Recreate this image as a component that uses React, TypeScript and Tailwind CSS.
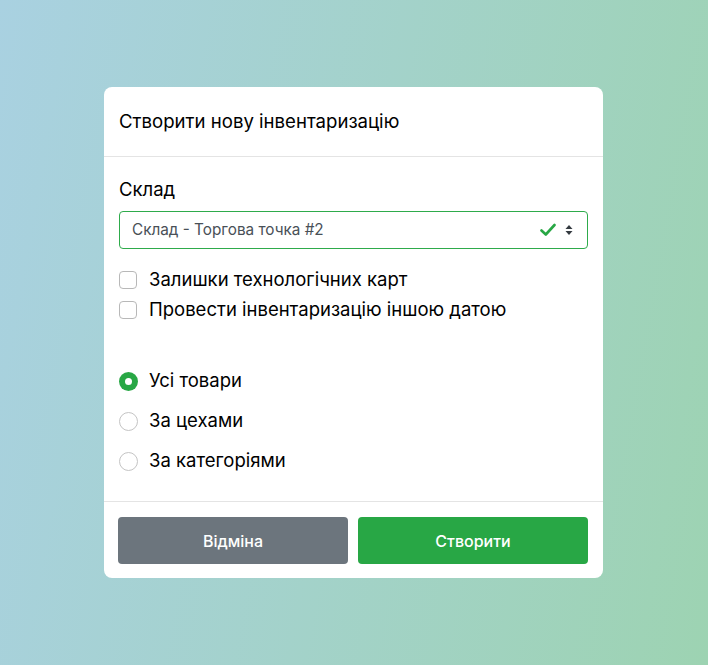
import React, { useState } from 'react';

const options = [
  { id: 'all', label: 'Усі товари' },
  { id: 'shops', label: 'За цехами' },
  { id: 'categories', label: 'За категоріями' },
];

const CheckRow: React.FC<{ label: string }> = ({ label }) => {
  const [on, setOn] = useState(false);
  return (
    <label className="flex items-center h-[30px] cursor-pointer" onClick={() => setOn(!on)}>
      <span
        className={`w-[18px] h-[18px] rounded-[4px] border ${on ? 'bg-[#28a745] border-[#28a745]' : 'bg-white border-[#b8b8b8]'}`}
      />
      <span className="ml-[12px] text-[18.5px] text-black">{label}</span>
    </label>
  );
};

export default function App() {
  const [mode, setMode] = useState('all');

  return (
    <div
      className="w-[708px] h-[665px] flex items-start justify-start pl-[104px] pt-[87px] bg-[linear-gradient(100deg,#a9d1e1,#9dd3b2)]"
      style={{ fontFamily: 'Inter, "Noto Sans", sans-serif' }}
    >
      <div className="w-[499px] bg-white rounded-[8px] flex flex-col">
        <div className="h-[70px] flex items-center px-[15px] border-b border-[#e4e4e4]">
          <h1 className="text-[18.6px] text-black">Створити нову інвентаризацію</h1>
        </div>

        <div className="px-[15px] pt-[20px] pb-[25px] flex flex-col">
          <div className="text-[18.5px] text-black leading-[24px]">Склад</div>
          <div className="mt-[10px] h-[38px] border border-[#2eab4b] rounded-[4px] flex items-center pl-[12px] pr-[14px]">
            <span className="flex-1 text-[15.3px] text-[#495057]">Склад - Торгова точка #2</span>
            <svg width="16" height="14" viewBox="0 0 16 14" className="mr-[9px]">
              <path d="M1.5 7.5 L5.8 11.5 L14.5 2" fill="none" stroke="#28a745" strokeWidth="2.6" strokeLinecap="round" strokeLinejoin="round" />
            </svg>
            <svg width="8" height="12" viewBox="0 0 8 12">
              <path d="M4 1 L7.5 5 H0.5 Z M4 11 L7.5 7 H0.5 Z" fill="#343a40" />
            </svg>
          </div>

          <div className="mt-[16px] flex flex-col">
            <CheckRow label="Залишки технологічних карт" />
            <CheckRow label="Провести інвентаризацію іншою датою" />
          </div>

          <div className="mt-[41px] flex flex-col gap-[10px]">
            {options.map((o) => (
              <label key={o.id} className="flex items-center h-[30px] cursor-pointer" onClick={() => setMode(o.id)}>
                {mode === o.id ? (
                  <span className="w-[19px] h-[19px] rounded-full bg-[#28a745] flex items-center justify-center">
                    <span className="w-[7px] h-[7px] rounded-full bg-white" />
                  </span>
                ) : (
                  <span className="w-[19px] h-[19px] rounded-full border border-[#c4c4c4] bg-white" />
                )}
                <span className="ml-[11px] text-[18.5px] text-black">{o.label}</span>
              </label>
            ))}
          </div>
        </div>

        <div className="border-t border-[#e4e4e4] pl-[14px] pr-[15px] pt-[15px] pb-[14px] flex gap-[10px]">
          <button className="flex-1 h-[47px] rounded-[4px] bg-[#6c757d] text-white text-[16px] font-medium">
            Відміна
          </button>
          <button className="flex-1 h-[47px] rounded-[4px] bg-[#28a745] text-white text-[16px] font-medium">
            Створити
          </button>
        </div>
      </div>
    </div>
  );
}
